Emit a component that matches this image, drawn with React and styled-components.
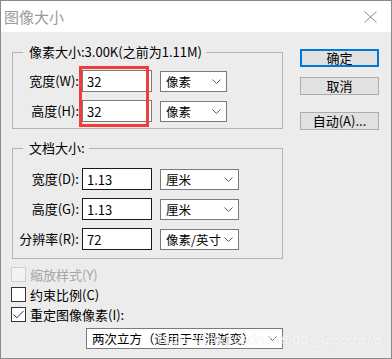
import React from 'react';
import styled, { createGlobalStyle } from 'styled-components';

const Global = createGlobalStyle`
  html, body { margin: 0; padding: 0; background: #ffffff; }
  body { font-family: "Noto Sans CJK SC", "Noto Sans", sans-serif; }
  * { box-sizing: border-box; }
`;

const FONT = `"Noto Sans CJK SC", "Noto Sans", sans-serif`;

const Window = styled.div`
  position: relative;
  width: 392px;
  height: 359px;
  border: 1px solid #8a8a8a;
  display: flex;
  flex-direction: column;
  background: #ececec;
  overflow: hidden;
  font-family: ${FONT};
`;

const TitleBar = styled.div`
  height: 31px;
  flex: none;
  background: #ffffff;
  display: flex;
  align-items: center;
  justify-content: space-between;
  padding: 0 14px 0 3px;
`;

const Title = styled.span`
  font-size: 15px;
  line-height: 18px;
  color: #9a9a9a;
`;

const Body = styled.div`
  flex: 1;
  display: flex;
  align-items: flex-start;
`;

const LeftCol = styled.div`
  display: flex;
  flex-direction: column;
  padding: 12px 0 0 11px;
`;

const RightCol = styled.div`
  display: flex;
  flex-direction: column;
  margin-left: 17px;
  padding-top: 17px;
`;

const Group = styled.fieldset`
  margin: ${p => p.$mt || 0}px 0 0 0;
  width: 271px;
  min-width: 0;
  border: 1px solid #b4b4b4;
  padding: ${p => p.$pt}px 0 ${p => p.$pb}px 5px;
`;

const Legend = styled.legend`
  margin-left: 5px;
  padding: 0 4px 0 6px;
  font-size: 13px;
  line-height: 16px;
  color: #000;
`;

const FormGrid = styled.div`
  display: grid;
  grid-template-columns: 64px 70px auto;
  grid-auto-rows: 22px;
  row-gap: 8px;
  align-items: end;
`;

const Label = styled.span`
  grid-column: 1;
  grid-row: ${p => p.$row};
  align-self: center;
  text-align: right;
  padding-right: 3px;
  font-size: 13px;
  line-height: 16px;
  color: #000;
  white-space: nowrap;
`;

const Field = styled.input`
  grid-column: 2;
  grid-row: ${p => p.$row};
  width: 70px;
  height: 22px;
  margin: 0;
  border: 1px solid ${p => (p.$dark ? '#1a1a1a' : '#7a7a7a')};
  background: #fff;
  padding: 0 0 0 4px;
  font-family: ${FONT};
  font-size: 13px;
  color: #000;
  outline: none;
`;

const Highlight = styled.div`
  grid-column: 2;
  grid-row: 1 / span 2;
  align-self: stretch;
  margin: -4px 3px -5px -3px;
  border: 3px solid #f23b3b;
  position: relative;
  z-index: 1;
  pointer-events: none;
`;

const SelectBox = styled.div`
  grid-column: 3;
  grid-row: ${p => p.$row || 'auto'};
  width: ${p => p.$w}px;
  height: 21px;
  margin-left: ${p => p.$ml || 0}px;
  margin-top: ${p => p.$mt || 0}px;
  border: 1px solid #7a7a7a;
  background: #fff;
  display: flex;
  align-items: center;
  justify-content: space-between;
  gap: 4px;
  padding: 0 ${p => p.$pr || 5}px 0 5px;
  font-size: 12.5px;
  line-height: 17px;
  color: #000;
  white-space: nowrap;
  svg { flex: none; }
`;

const SelectText = styled.span`
  min-width: 0;
`;

const Chevron = () => (
  <svg width="9" height="5" viewBox="0 0 9 5">
    <path d="M0.5 0.5 L4.5 4.5 L8.5 0.5" fill="none" stroke="#5a5a5a" strokeWidth="1" />
  </svg>
);

const Select = ({ children, w, ml, mt, pr, row }) => (
  <SelectBox $w={w} $ml={ml} $mt={mt} $pr={pr} $row={row}>
    <SelectText>{children}</SelectText>
    <Chevron />
  </SelectBox>
);

const Checks = styled.div`
  display: flex;
  flex-direction: column;
  gap: 5px;
  margin-top: 8px;
  margin-left: -1px;
`;

const CheckRow = styled.label`
  display: flex;
  align-items: center;
  gap: 4px;
  height: 15px;
  font-size: 13px;
  line-height: 15px;
  color: ${p => (p.$disabled ? '#a6a6a6' : '#000')};
`;

const Box = styled.span`
  width: 15px;
  height: 15px;
  flex: none;
  border: 1px solid ${p => (p.$disabled ? '#cfcfcf' : '#333333')};
  background: ${p => (p.$disabled ? '#f3f3f3' : '#ffffff')};
  display: flex;
  align-items: center;
  justify-content: center;
`;

const Button = styled.div`
  width: 79px;
  height: 18px;
  margin-top: ${p => p.$mt || 0}px;
  border: ${p => (p.$primary ? '2px solid #0078d7' : '1px solid #adadad')};
  background: #e1e1e1;
  display: flex;
  align-items: center;
  justify-content: center;
  font-size: 13px;
  line-height: 16px;
  color: #000;
`;

const Watermark = styled.div`
  position: absolute;
  right: 10px;
  top: 330px;
  font-family: "Liberation Sans", Arial, sans-serif;
  font-size: 14.5px;
  line-height: 17px;
  color: rgba(255, 255, 255, 0.85);
  text-shadow: 0 0 1px rgba(0, 0, 0, 0.12);
  pointer-events: none;
  white-space: nowrap;
`;

const CloseIcon = () => (
  <svg width="13" height="12" viewBox="0 0 13 12">
    <path d="M0.5 0.5 L12.5 11.5 M12.5 0.5 L0.5 11.5" stroke="#8a8a8a" strokeWidth="1" fill="none" />
  </svg>
);

const Check = ({ checked, disabled, children }) => (
  <CheckRow $disabled={disabled}>
    <Box $disabled={disabled}>
      {checked && (
        <svg width="11" height="9" viewBox="0 0 11 9">
          <path d="M0.5 4.5 L3.8 7.8 L10.5 1" fill="none" stroke="#333" strokeWidth="1" />
        </svg>
      )}
    </Box>
    <span>{children}</span>
  </CheckRow>
);

const BottomSelect = styled.div`
  display: flex;
`;

export default function App() {
  return (
    <>
      <Global />
      <Window>
        <TitleBar>
          <Title>图像大小</Title>
          <CloseIcon />
        </TitleBar>
        <Body>
          <LeftCol>
            <Group $pt={10} $pb={6}>
              <Legend>像素大小:3.00K(之前为1.11M)</Legend>
              <FormGrid>
                <Label $row={1}>宽度(W):</Label>
                <Field $row={1} readOnly value="32" />
                <Select row={1} w={67} ml={8} pr={5}>像素</Select>
                <Label $row={2}>高度(H):</Label>
                <Field $row={2} readOnly value="32" />
                <Select row={2} w={67} ml={8} pr={5}>像素</Select>
                <Highlight />
              </FormGrid>
            </Group>
            <Group $mt={11} $pt={12} $pb={8}>
              <Legend>文档大小:</Legend>
              <FormGrid>
                <Label $row={1}>宽度(D):</Label>
                <Field $row={1} $dark readOnly value="1.13" />
                <Select row={1} w={79} ml={8} pr={5}>厘米</Select>
                <Label $row={2}>高度(G):</Label>
                <Field $row={2} $dark readOnly value="1.13" />
                <Select row={2} w={79} ml={8} pr={5}>厘米</Select>
                <Label $row={3}>分辨率(R):</Label>
                <Field $row={3} $dark readOnly value="72" />
                <Select row={3} w={79} ml={8} pr={5}>像素/英寸</Select>
              </FormGrid>
            </Group>
            <Checks>
              <Check disabled>缩放样式(Y)</Check>
              <Check>约束比例(C)</Check>
              <Check checked>重定图像像素(I):</Check>
            </Checks>
            <BottomSelect>
              <Select w={197} ml={74} mt={6} pr={5}>两次立方（适用于平滑渐变）</Select>
            </BottomSelect>
          </LeftCol>
          <RightCol>
            <Button $primary>确定</Button>
            <Button $mt={10}>取消</Button>
            <Button $mt={17}>自动(A)...</Button>
          </RightCol>
        </Body>
        <Watermark>https://blog.csdn.net/qq_42869979</Watermark>
      </Window>
    </>
  );
}
